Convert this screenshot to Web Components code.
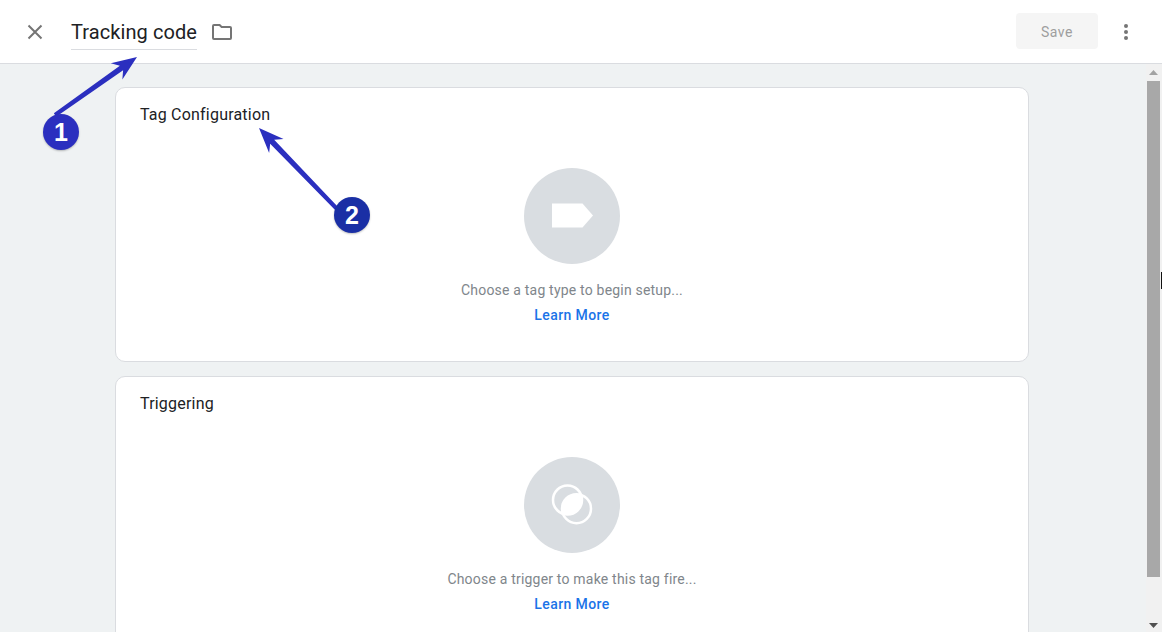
<!DOCTYPE html>
<html>
<head>
<meta charset="utf-8">
<title>Tracking code</title>
<style>
html,body{margin:0;height:100%;overflow:hidden}
body{font-family:Roboto,"Liberation Sans",sans-serif;color:#202124}
</style>
</head>
<body>
<tag-editor>
	<editor-header slot="header" title-text="Tracking code"></editor-header>
	<setup-card heading="Tag Configuration" hint="Choose a tag type to begin setup..." kind="tag"></setup-card>
	<setup-card heading="Triggering" hint="Choose a trigger to make this tag fire..." kind="trigger"></setup-card>
</tag-editor>
<step-arrow n="1" cx="61" cy="132" x1="55" y1="115" x2="137" y2="57"></step-arrow>
<step-arrow n="2" cx="352" cy="215" x1="338" y1="210" x2="259" y2="128"></step-arrow>

<script>
//ページ全体：ヘッダ＋スクロール領域
class TagEditor extends HTMLElement{ constructor(){
	super();
	this.attachShadow({mode:"open"}).innerHTML = `
	<style>
	:host{display:flex;flex-direction:column;height:632px;overflow:hidden}
	.body{flex:1;display:flex;min-height:0;background:#eff2f3;position:relative}
	.scroll{flex:1;min-width:0;overflow:hidden;padding:23px 0 0 115px;box-sizing:border-box;
		display:flex;flex-direction:column;gap:14px}
	.bar{flex:none;width:16px;box-sizing:border-box;padding:0 2px 0 1px;background:#f1f1f1;display:flex;flex-direction:column;align-items:center}
	.btn{flex:none;height:17px;display:flex;align-items:center;justify-content:center}
	.btn.down{padding-top:3px;box-sizing:border-box}
	.thumb{flex:none;height:496px;width:13px;background:#a8a8a8}
	.rest{flex:1}
	.cursor{position:absolute;right:0;top:208px;width:1px;height:17px;background:#111}
	</style>
	<slot name="header"></slot>
	<div class="body">
		<div class="scroll"><slot></slot></div>
		<div class="bar">
			<div class="btn"><svg width="9" height="5" viewBox="0 0 9 5"><path d="M4.500 0 9 5H0z" fill="#a3a3a3"/></svg></div>
			<div class="thumb"></div>
			<div class="rest"></div>
			<div class="btn down"><svg width="9" height="5" viewBox="0 0 9 5"><path d="M0 0h9L4.500 5z" fill="#505050"/></svg></div>
		</div>
		<div class="cursor"></div>
	</div>`;
}}
customElements.define("tag-editor",TagEditor);

//上部バー
class EditorHeader extends HTMLElement{ constructor(){
	super();
	const title = this.getAttribute("title-text");
	this.attachShadow({mode:"open"}).innerHTML = `
	<style>
	:host{display:flex;flex:none;align-items:center;height:63px;background:#fff;border-bottom:1px solid #dadce0;
		font-family:Roboto,"Liberation Sans",sans-serif}
	.close{display:flex;margin-left:24px;width:22px;height:22px}
	.name{margin-left:25px;font-size:20px;line-height:26px;height:26px;margin-top:6px;padding-bottom:4px;color:#202124;
		border-bottom:1px solid #dadce0;letter-spacing:.08px}
	.folder{display:flex;margin-left:15px}
	.sp{flex:1}
	.save{width:82px;height:36px;box-sizing:border-box;padding-top:2px;background:#f5f5f5;border-radius:4px;color:#9e9e9e;font-size:14px;
		letter-spacing:.5px;font-weight:400;display:flex;align-items:center;justify-content:center;margin-bottom:1px}
	.more{display:flex;margin:0 24px 0 16px;width:24px;justify-content:center}
	</style>
	<span class="close"><svg width="22" height="22" viewBox="0 0 22 22"><path d="M4.500 4.500 17.500 17.500M17.500 4.500 4.500 17.500" stroke="#757575" stroke-width="2" fill="none"/></svg></span>
	<span class="name">${title}</span>
	<span class="folder"><svg width="20" height="16" viewBox="0 0 20 16"><path d="M2 1h5.600l2 2H18c.6 0 1 .5 1 1v10c0 .6-.4 1-1 1H2c-.6 0-1-.4-1-1V2c0-.6.4-1 1-1z" fill="none" stroke="#757575" stroke-width="2"/></svg></span>
	<span class="sp"></span>
	<span class="save">Save</span>
	<span class="more"><svg width="6" height="18" viewBox="0 0 6 18"><circle cx="3" cy="3" r="2" fill="#757575"/><circle cx="3" cy="9" r="2" fill="#757575"/><circle cx="3" cy="15" r="2" fill="#757575"/></svg></span>`;
}}
customElements.define("editor-header",EditorHeader);

//カード：見出し＋丸アイコン＋説明＋リンク
class SetupCard extends HTMLElement{ constructor(){
	super();
	const icons = {
		tag:`<path d="M28 35.500h30.500l10.500 12-10.500 12H28z" fill="#fff"/>`,
		trigger:`<clipPath id="lens"><circle cx="43.500" cy="43" r="14.500"/></clipPath>
			<circle cx="52.500" cy="51.700" r="14.500" fill="#fff" clip-path="url(#lens)"/>
			<circle cx="43.500" cy="43" r="14.500" fill="none" stroke="#fff" stroke-width="2.500"/>
			<circle cx="52.500" cy="51.700" r="14.500" fill="none" stroke="#fff" stroke-width="2.500"/>`
	};
	const kind = this.getAttribute("kind");
	this.attachShadow({mode:"open"}).innerHTML = `
	<style>
	:host{display:flex;flex-direction:column;flex:none;box-sizing:border-box;width:914px;height:275px;background:#fff;
		border:1px solid #dadce0;border-radius:10px;padding:17px 24px 0;align-items:stretch;
		font-family:Roboto,"Liberation Sans",sans-serif}
	h2{margin:0;font-size:16px;line-height:20px;font-weight:400;color:#202124;letter-spacing:.2px}
	.mid{display:flex;flex-direction:column;align-items:center;margin-top:43px}
	.hint{margin-top:16px;font-size:14px;line-height:20px;color:#80868b;letter-spacing:.2px}
	a{margin-top:5px;font-size:14px;line-height:20px;font-weight:500;color:#1a73e8;text-decoration:none;letter-spacing:.4px}
	svg{display:block}
	</style>
	<h2>${this.getAttribute("heading")}</h2>
	<div class="mid">
		<svg width="96" height="96" viewBox="0 0 96 96"><circle cx="48" cy="48" r="48" fill="#d9dde1"/>${icons[kind]}</svg>
		<div class="hint">${this.getAttribute("hint")}</div>
		<a href="#">Learn More</a>
	</div>`;
}}
customElements.define("setup-card",SetupCard);

//注釈の矢印と番号：スクショ上に載せる注釈なので座標指定
class StepArrow extends HTMLElement{ constructor(){
	super();
	const [cx,cy,x1,y1,x2,y2] = ["cx","cy","x1","y1","x2","y2"].map(k=>+this.getAttribute(k));
	const ang = Math.atan2(y2-y1,x2-x1)*180/Math.PI;
	const len = Math.hypot(x2-x1,y2-y1);
	const n = this.getAttribute("n");
	const fill = "#2b2fbf";
	this.attachShadow({mode:"open"}).innerHTML = `
	<style>
	:host{position:absolute;left:0;top:0;width:1162px;height:632px;pointer-events:none}
	svg{position:absolute;left:0;top:0}
	.num{position:absolute;left:${cx-18}px;top:${cy-18}px;width:36px;height:36px;border-radius:50%;
		background:${n==="1"?"#2b2fbf":"#1a2fa5"};color:#fff;font:700 25px/36px "Liberation Sans",sans-serif;text-align:center;
		box-shadow:0 1px 2px rgba(0,0,0,.25)}
	</style>
	<svg width="1162" height="632" viewBox="0 0 1162 632">
		<g transform="translate(${x2} ${y2}) rotate(${ang})">
			<path d="M-${len} -2L-19 -2.800L-25 -10L0 0L-25 10L-19 2.800L-${len} 2z" fill="${fill}"/>
		</g>
	</svg>
	<div class="num">${n}</div>`;
}}
customElements.define("step-arrow",StepArrow);
</script>
</body>
</html>
